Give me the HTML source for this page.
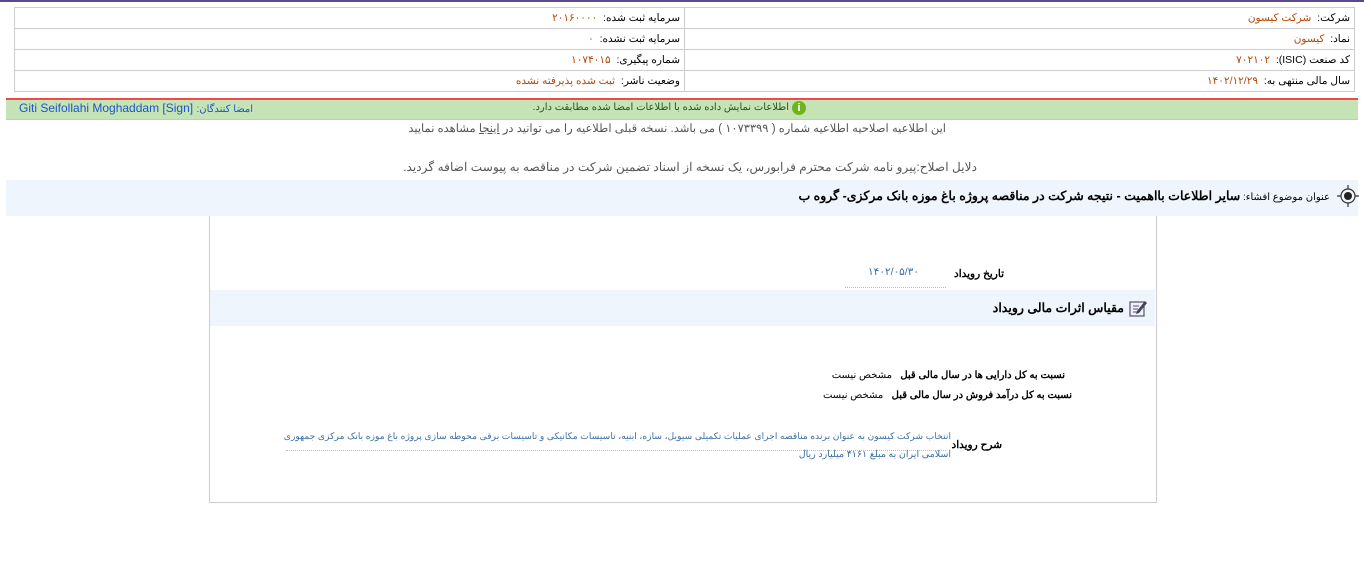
<!DOCTYPE html>
<html><head><meta charset="utf-8"><style>
body{margin:0;width:1364px;height:565px;background:#fff;position:relative;overflow:hidden;font-family:Tahoma,"Liberation Sans","Noto Sans CJK SC",sans-serif;font-size:11px;color:#000}
.a{position:absolute;white-space:nowrap;direction:rtl}
.r{color:#b5470b}
table{position:absolute;left:14px;top:7px;width:1341px;border-collapse:collapse;direction:rtl}
td{border:1px solid #ccc;height:20px;padding:0 4px;text-align:right;font-size:10.5px;line-height:20px}
</style></head><body>
<div style="position:absolute;left:0;top:0;width:1364px;height:2px;background:#5a4a8a"></div>
<table><tr><td style="width:661px">شرکت:&nbsp; <span class="r">شرکت کیسون</span></td><td>سرمایه ثبت شده:&nbsp; <span class="r">۲۰۱۶۰۰۰۰</span></td></tr>
<tr><td>نماد:&nbsp; <span class="r">کیسون</span></td><td>سرمایه ثبت نشده:&nbsp; <span class="r">۰</span></td></tr>
<tr><td>کد صنعت (ISIC):&nbsp; <span class="r">۷۰۲۱۰۲</span></td><td>شماره پیگیری:&nbsp; <span class="r">۱۰۷۴۰۱۵</span></td></tr>
<tr><td>سال مالی منتهی به:&nbsp; <span class="r">۱۴۰۲/۱۲/۲۹</span></td><td>وضعیت ناشر:&nbsp; <span class="r">ثبت شده پذیرفته نشده</span></td></tr></table>
<div style="position:absolute;left:6px;top:98px;width:1352px;height:2px;background:#e84c4c"></div>
<div style="position:absolute;left:6px;top:100px;width:1352px;height:19px;background:#c5e3b5;border-bottom:1px solid #b7d3a8"></div>
<div style="position:absolute;left:792px;top:101px;width:14px;height:14px;border-radius:50%;background:#6fb31f;color:#fff;font-size:11px;font-weight:bold;text-align:center;line-height:14px">i</div>
<div class="a" style="right:575px;top:102px;color:#225522;font-size:10px">اطلاعات نمایش داده شده با اطلاعات امضا شده مطابقت دارد.</div>
<div class="a" style="left:19px;top:101px;direction:ltr;font-size:12px;color:#1a57c9">Giti Seifollahi Moghaddam [Sign] <span style="font-size:10px">:امضا کنندگان</span></div>
<div class="a" style="right:418px;top:121px;font-size:11.5px;color:#555">این اطلاعیه اصلاحیه اطلاعیه شماره ( ۱۰۷۳۳۹۹ ) می باشد. نسخه قبلی اطلاعیه را می توانید در <u>اینجا</u> مشاهده نمایید</div>
<div class="a" style="right:387px;top:160px;font-size:12.2px;color:#555">دلایل اصلاح:پیرو نامه شرکت محترم فرابورس، یک نسخه از اسناد تضمین شرکت در مناقصه به پیوست اضافه گردید.</div>
<div style="position:absolute;left:6px;top:180px;width:1352px;height:36px;background:#eef5fc"></div>
<svg style="position:absolute;left:1335px;top:183px" width="26" height="26" viewBox="0 0 26 26"><circle cx="13" cy="13" r="7" fill="none" stroke="#333" stroke-width="1.2"/><circle cx="13" cy="13" r="4" fill="#222"/><path d="M13 2v4M13 20v4M2 13h4M20 13h4" stroke="#333" stroke-width="1.2"/></svg>
<div class="a" style="right:34px;top:188px;font-size:12.5px;font-weight:bold"><span style="font-size:10px;font-weight:normal">عنوان موضوع افشاء: </span>سایر اطلاعات بااهمیت - نتیجه شرکت در مناقصه پروژه باغ موزه بانک مرکزی- گروه ب</div>
<div style="position:absolute;left:209px;top:216px;width:946px;height:286px;border:1px solid #ccc;border-top:none"></div>
<div class="a" style="right:360px;top:268px;font-weight:bold;font-size:10.5px">تاریخ رویداد</div>
<div class="a" style="right:445px;top:266px;color:#3a6ea5;font-size:10.5px">۱۴۰۲/۰۵/۳۰</div>
<div style="position:absolute;left:845px;top:287px;width:101px;border-top:1px dotted #bbb"></div>
<div style="position:absolute;left:210px;top:290px;width:945px;height:36px;background:#eef5fc"></div>
<svg style="position:absolute;left:1128px;top:298px" width="20" height="20" viewBox="0 0 20 20"><rect x="2" y="4" width="14" height="14" fill="#eef" stroke="#556" stroke-width="1.2"/><path d="M5 8h6M5 11h5M5 14h4" stroke="#556"/><path d="M9 13l8-10 2 2-8 10-3 1z" fill="#445"/></svg>
<div class="a" style="right:240px;top:300px;font-size:12.5px;font-weight:bold">مقیاس اثرات مالی رویداد</div>
<div class="a" style="right:299px;top:370px;font-weight:bold;font-size:10px">نسبت به کل دارایی ها در سال مالی قبل&nbsp;&nbsp; <span style="font-weight:normal">مشخص نیست</span></div>
<div class="a" style="right:292px;top:390px;font-weight:bold;font-size:10px">نسبت به کل درآمد فروش در سال مالی قبل&nbsp;&nbsp; <span style="font-weight:normal">مشخص نیست</span></div>
<div class="a" style="right:362px;top:439px;font-weight:bold;font-size:10.5px">شرح رویداد</div>
<div class="a" style="right:413px;top:431px;color:#3a6ea5;font-size:9.2px">انتخاب شرکت کیسون به عنوان برنده مناقصه اجرای عملیات تکمیلی سیویل، سازه، ابنیه، تاسیسات مکانیکی و تاسیسات برقی محوطه سازی پروژه باغ موزه بانک مرکزی جمهوری</div>
<div style="position:absolute;left:286px;top:450px;width:660px;border-top:1px dotted #bbb"></div>
<div class="a" style="right:413px;top:449px;color:#3a6ea5;font-size:9.5px">اسلامی ایران به مبلغ ۴۱۶۱ میلیارد ریال</div>
</body></html>
